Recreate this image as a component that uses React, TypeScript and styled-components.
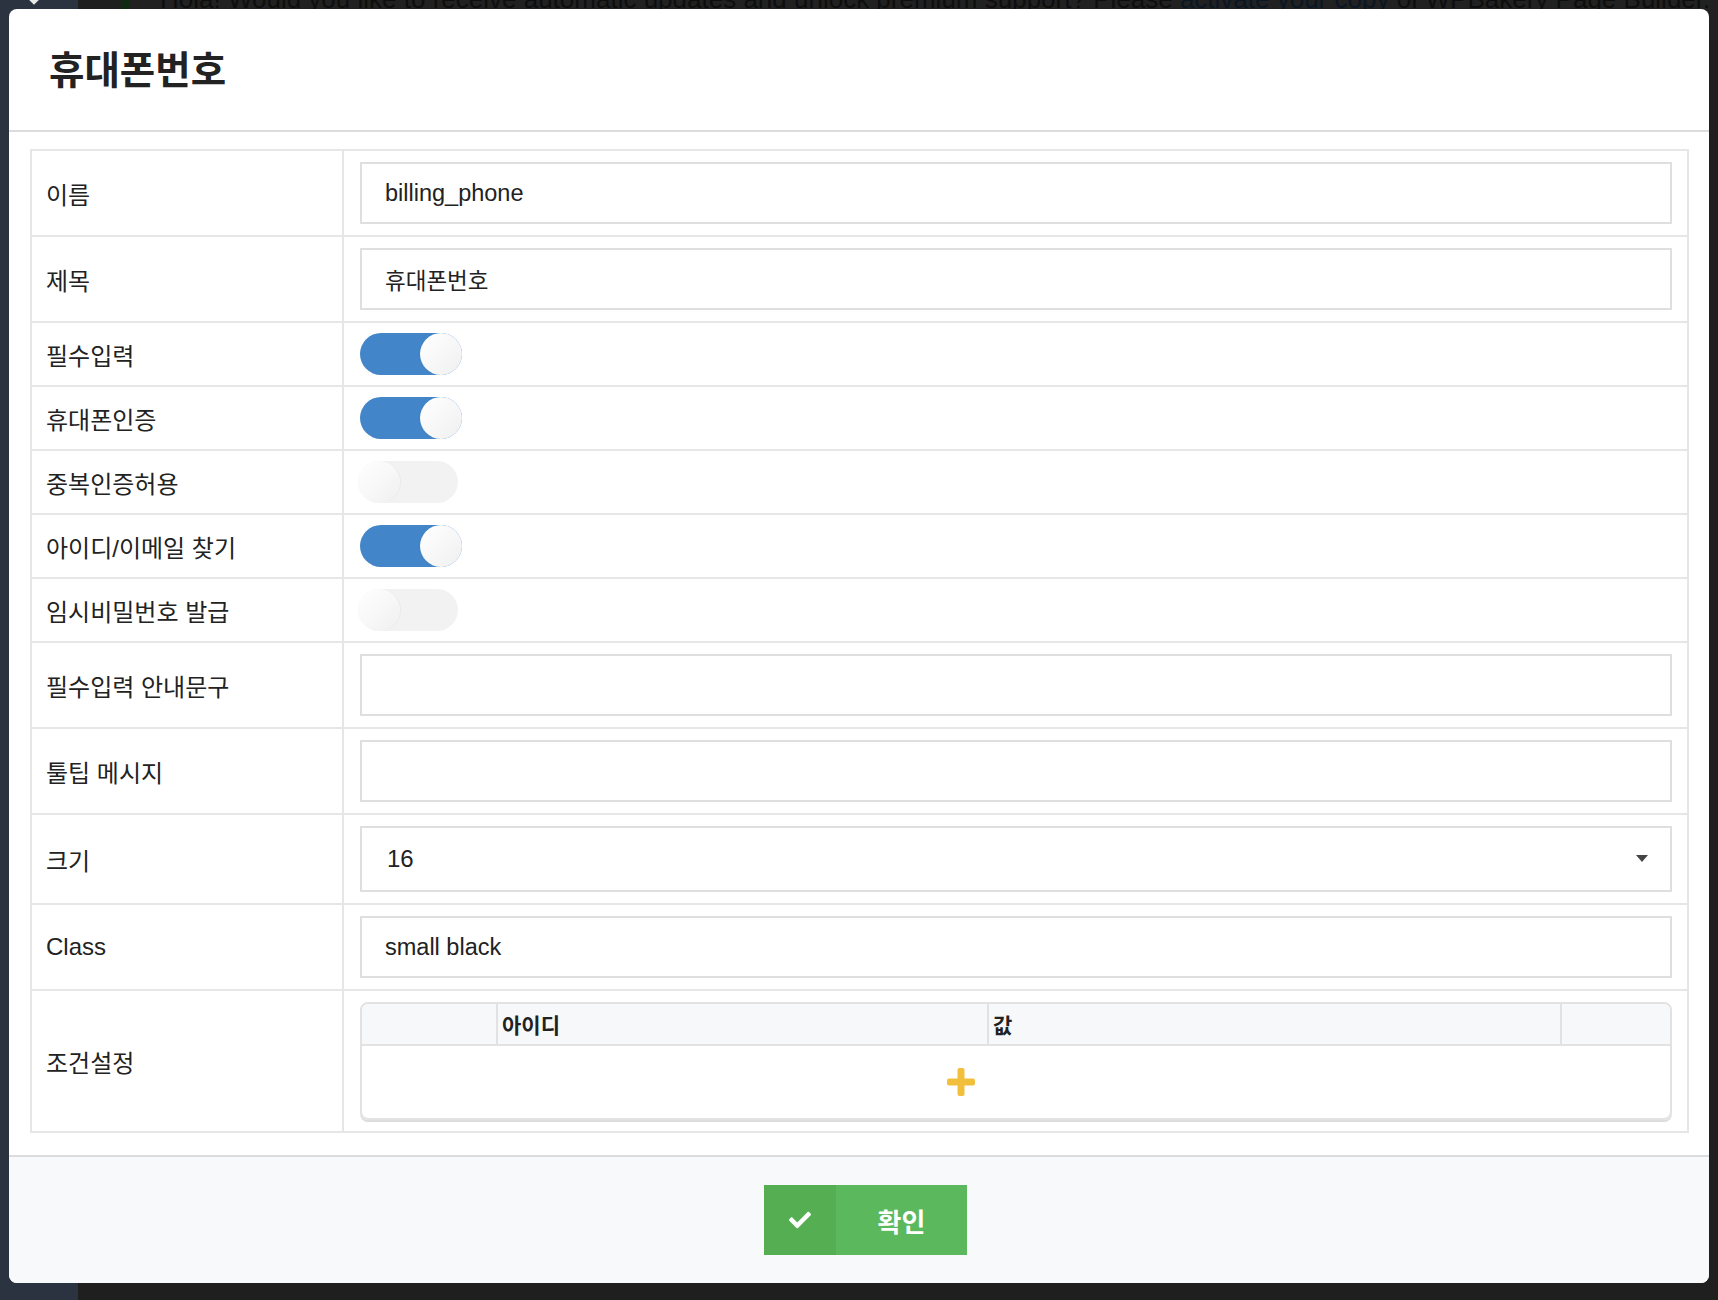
import React from 'react'
import styled, { createGlobalStyle } from 'styled-components'
import { FaCheck } from 'react-icons/fa'

const GlobalStyle = createGlobalStyle`
  html, body {
    margin: 0;
    padding: 0;
  }
  body {
    background: #1f1f1f;
    font-family: 'Liberation Sans', 'Noto Sans CJK KR', sans-serif;
    color: #222;
  }
  * {
    box-sizing: border-box;
  }
`

const Page = styled.div`
  position: relative;
  display: flex;
  width: 1718px;
  height: 1300px;
  overflow: hidden;
`

const Sidebar = styled.div`
  width: 78px;
  flex: none;
  background: #2c3340;
  display: flex;
  justify-content: center;
`

const SideChevron = styled.svg`
  margin-top: -9px;
  margin-left: -10px;
`

const Main = styled.div`
  flex: 1;
  background: #1f1f1f;
  padding-left: 44px;
`

const Notice = styled.div`
  background: #212121;
  border-left: 8px solid #0f2a10;
  padding-left: 30px;
  height: 40px;
  font-size: 26px;
  line-height: 30px;
  white-space: nowrap;
  color: #0e0e0e;
  overflow: hidden;

  p {
    margin: -16px 0 0;
  }

  a {
    color: #0b1623;
    text-decoration: none;
  }
`

const Modal = styled.div`
  position: absolute;
  left: 9px;
  top: 9px;
  width: 1700px;
  height: 1274px;
  border-radius: 8px;
  background: #fff;
  overflow: hidden;
  display: flex;
  flex-direction: column;
`

const Header = styled.div`
  height: 123px;
  flex: none;
  display: flex;
  align-items: center;
  padding-left: 40px;
  border-bottom: 2px solid #dcdcdc;
`

const Title = styled.h2`
  margin: 3px 0 0;
  font-size: 38.5px;
  font-weight: 700;
  color: #222;
  line-height: 1;
`

const Body = styled.div`
  flex: 1;
  padding: 17px 20px 0 21px;
`

const Table = styled.div`
  border: 2px solid #e6e6e6;
`

const Row = styled.div`
  display: grid;
  grid-template-columns: 312px 1fr;

  & + & {
    border-top: 2px solid #e6e6e6;
  }
`

const Label = styled.div`
  border-right: 2px solid #e6e6e6;
  padding-left: 14px;
  display: flex;
  align-items: center;
  font-size: 24px;
  color: #222;
`

const Value = styled.div<{ $tight?: boolean }>`
  padding: ${(p) => (p.$tight ? '10px' : '11px')} 15px ${(p) => (p.$tight ? '10px' : '11px')} 16px;
  display: flex;
  align-items: center;
`

const TextInput = styled.input<{ $latin?: boolean }>`
  width: 100%;
  height: 62px;
  border: 2px solid #dfdfdf;
  border-radius: 0;
  padding: 0 23px;
  font-family: 'Liberation Sans', 'Noto Sans CJK KR', sans-serif;
  font-size: ${(p) => (p.$latin ? '23.5px' : '22.5px')};
  color: #222;
  outline: none;
  background: #fff;
`

const Select = styled.div`
  position: relative;
  width: 100%;
  height: 66px;
  border: 2px solid #dfdfdf;
  padding-left: 25px;
  display: flex;
  align-items: center;
  font-size: 24px;
  color: #222;

  &::after {
    content: '';
    position: absolute;
    right: 22px;
    top: 27px;
    border-left: 6px solid transparent;
    border-right: 6px solid transparent;
    border-top: 7px solid #444;
  }
`

const Toggle = styled.div<{ $on: boolean }>`
  position: relative;
  width: ${(p) => (p.$on ? '102px' : '100px')};
  height: 42px;
  border-radius: 21px;
  background: ${(p) => (p.$on ? '#4285c9' : '#f2f2f2')};
  margin-left: ${(p) => (p.$on ? '0' : '-2px')};

  &::after {
    content: '';
    position: absolute;
    top: 0;
    ${(p) => (p.$on ? 'right: 0;' : 'left: 0;')}
    width: 42px;
    height: 42px;
    border-radius: 50%;
    background: linear-gradient(135deg, #ffffff 0%, #f7f7f7 55%, #efefef 100%);
    box-shadow: ${(p) => (p.$on ? '-1px 0 1px rgba(0,0,0,0.04)' : '1px 0 1px rgba(0,0,0,0.04)')};
  }
`

const CondTable = styled.div`
  width: 100%;
  border: 2px solid #e2e2e2;
  border-radius: 8px;
  box-shadow: 0 2px 0 #dddddd;
  overflow: hidden;
  display: grid;
  grid-template-columns: 134px 491px 573px 1fr;
`

const CondHead = styled.div`
  height: 42px;
  background: #f7f8fa;
  border-bottom: 2px solid #e2e2e2;
  display: flex;
  align-items: center;
  padding-left: 4px;
  font-size: 21px;
  font-weight: 700;
  color: #222;

  & + & {
    border-left: 2px solid #e2e2e2;
  }
`

const CondBody = styled.div`
  grid-column: 1 / 4;
  height: 72px;
  display: flex;
  align-items: center;
  justify-content: center;
`

const Footer = styled.div`
  height: 128px;
  flex: none;
  background: #f8f9fb;
  border-top: 2px solid #dcdcdc;
  display: flex;
  align-items: center;
  justify-content: center;
  padding-left: 13px;
`

const ConfirmButton = styled.button`
  display: flex;
  width: 203px;
  height: 70px;
  border: none;
  padding: 0;
  background: #5cb85c;
  color: #fff;
  cursor: pointer;
  font-family: 'Liberation Sans', 'Noto Sans CJK KR', sans-serif;
`

const ButtonIcon = styled.span`
  width: 72px;
  height: 100%;
  background: #55ae51;
  display: flex;
  align-items: center;
  justify-content: center;
  font-size: 22px;
`

const ButtonText = styled.span`
  flex: 1;
  display: flex;
  align-items: center;
  justify-content: center;
  font-size: 26px;
  font-weight: 700;
`

const PlusIcon = () => (
  <svg width="28" height="28" viewBox="0 0 28 28">
    <rect x="10.5" y="0" width="7" height="28" rx="2" fill="#f2bf3d" />
    <rect x="0" y="10.5" width="28" height="7" rx="2" fill="#f2bf3d" />
  </svg>
)

type Field =
  | { kind: 'text'; label: string; value: string; latin?: boolean }
  | { kind: 'toggle'; label: string; on: boolean }
  | { kind: 'select'; label: string; value: string }

const fields: Field[] = [
  { kind: 'text', label: '이름', value: 'billing_phone', latin: true },
  { kind: 'text', label: '제목', value: '휴대폰번호' },
  { kind: 'toggle', label: '필수입력', on: true },
  { kind: 'toggle', label: '휴대폰인증', on: true },
  { kind: 'toggle', label: '중복인증허용', on: false },
  { kind: 'toggle', label: '아이디/이메일 찾기', on: true },
  { kind: 'toggle', label: '임시비밀번호 발급', on: false },
  { kind: 'text', label: '필수입력 안내문구', value: '' },
  { kind: 'text', label: '툴팁 메시지', value: '' },
  { kind: 'select', label: '크기', value: '16' },
  { kind: 'text', label: 'Class', value: 'small black', latin: true },
]

export default function App() {
  return (
    <>
      <GlobalStyle />
      <Page>
        <Sidebar>
          <SideChevron width="22" height="16" viewBox="0 0 22 16">
            <polyline points="3,3 11,11 19,3" fill="none" stroke="#e8e8e8" strokeWidth="4" />
          </SideChevron>
        </Sidebar>
        <Main>
          <Notice>
            <p>
              Hola! Would you like to receive automatic updates and unlock premium support? Please{' '}
              <a href="#">activate your copy</a> of WPBakery Page Builder.
            </p>
          </Notice>
        </Main>

        <Modal>
          <Header>
            <Title>휴대폰번호</Title>
          </Header>
          <Body>
            <Table>
              {fields.map((f) => (
                <Row key={f.label}>
                  <Label>{f.label}</Label>
                  {f.kind === 'text' && (
                    <Value>
                      <TextInput readOnly defaultValue={f.value} $latin={f.latin} />
                    </Value>
                  )}
                  {f.kind === 'toggle' && (
                    <Value $tight>
                      <Toggle $on={f.on} />
                    </Value>
                  )}
                  {f.kind === 'select' && (
                    <Value>
                      <Select>{f.value}</Select>
                    </Value>
                  )}
                </Row>
              ))}
              <Row>
                <Label>조건설정</Label>
                <Value>
                  <CondTable>
                    <CondHead />
                    <CondHead>아이디</CondHead>
                    <CondHead>값</CondHead>
                    <CondHead />
                    <CondBody>
                      <PlusIcon />
                    </CondBody>
                  </CondTable>
                </Value>
              </Row>
            </Table>
          </Body>
          <Footer>
            <ConfirmButton>
              <ButtonIcon>
                <FaCheck />
              </ButtonIcon>
              <ButtonText>확인</ButtonText>
            </ConfirmButton>
          </Footer>
        </Modal>
      </Page>
    </>
  )
}
